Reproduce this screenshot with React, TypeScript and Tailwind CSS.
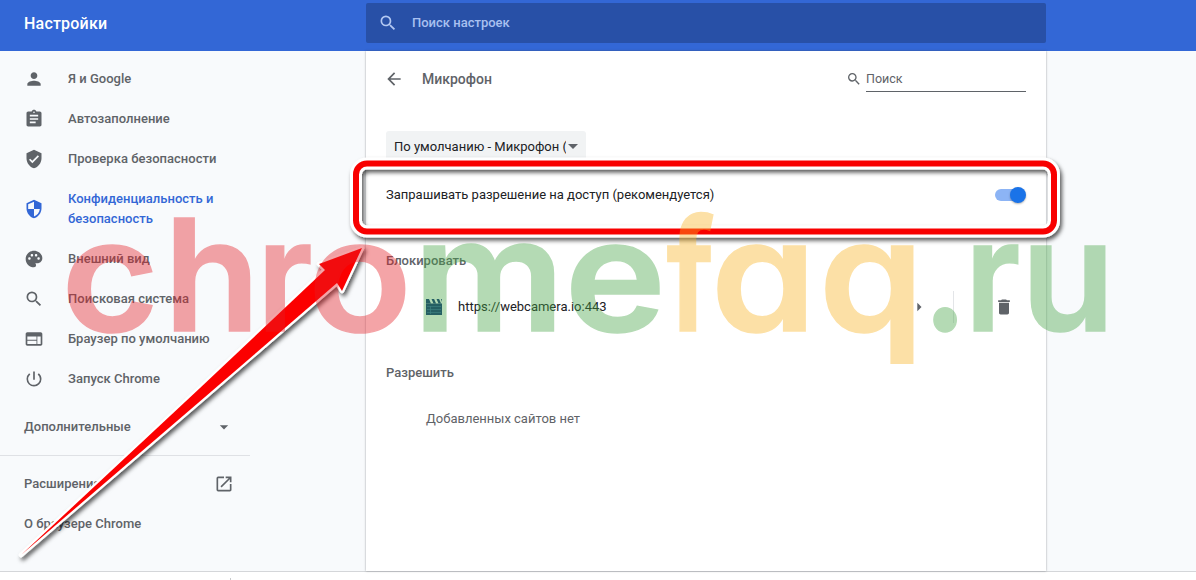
import type { IconType } from "react-icons"
import {
  MdArrowBack,
  MdArrowDropDown,
  MdArrowRight,
  MdAssignment,
  MdDelete,
  MdOpenInNew,
  MdPalette,
  MdPerson,
  MdPowerSettingsNew,
  MdSearch,
  MdSecurity,
  MdVerifiedUser,
  MdWeb,
} from "react-icons/md"

type MenuItem = {
  label: string
  icon: IconType
  active?: boolean
}

const MENU: MenuItem[] = [
  { label: "Я и Google", icon: MdPerson },
  { label: "Автозаполнение", icon: MdAssignment },
  { label: "Проверка безопасности", icon: MdVerifiedUser },
  { label: "Конфиденциальность и безопасность", icon: MdSecurity, active: true },
  { label: "Внешний вид", icon: MdPalette },
  { label: "Поисковая система", icon: MdSearch },
  { label: "Браузер по умолчанию", icon: MdWeb },
  { label: "Запуск Chrome", icon: MdPowerSettingsNew },
]

const RED = "#e61e25"
const GREEN = "#46a546"
const ORANGE = "#fab423"

// left edge and horizontal stretch of every watermark letter
const WATERMARK = [
  { char: "c", x: 61.3, stretch: 1.075, fill: RED },
  { char: "h", x: 164, stretch: 1.005, fill: RED },
  { char: "r", x: 257, stretch: 0.9, fill: RED },
  { char: "o", x: 308, stretch: 1.095, fill: RED },
  { char: "m", x: 413, stretch: 1.08, fill: GREEN },
  { char: "e", x: 564.6, stretch: 1.1, fill: GREEN },
  { char: "f", x: 666.5, stretch: 0.79, fill: ORANGE },
  { char: "a", x: 710.8, stretch: 1.085, fill: ORANGE },
  { char: "q", x: 818.8, stretch: 1.08, fill: ORANGE },
  { char: ".", x: 922.2, stretch: 0.92, fill: GREEN },
  { char: "r", x: 964.8, stretch: 0.9, fill: GREEN },
  { char: "u", x: 1020.9, stretch: 0.985, fill: GREEN },
]

function Header() {
  return <header className="flex h-[51px] shrink-0 bg-[#3367d6]">
    <div className="w-[366px] shrink-0 pl-6 pt-3 text-[16px] leading-6 font-medium tracking-[0.2px] text-white">
      Настройки
    </div>
    <div className="mt-[3px] flex h-10 w-[680px] items-center rounded-[2px] bg-[#2850a7] pl-3">
      <MdSearch className="size-5 text-[#b3c8f2]"/>
      <span className="ml-3.5 text-[13px] font-medium text-[#a9c0f0]">Поиск настроек</span>
    </div>
  </header>
}

function Sidebar() {
  return <nav className="w-[366px] shrink-0 pt-2 text-[13px] leading-5 font-medium tracking-[0.02px] text-[#5f6368]">
    {MENU.map(({ label, icon: Icon, active }) => (
      <div
        key={label}
        className={active
          ? "flex h-[60px] items-center pl-6 text-[#3367d6]"
          : "flex h-10 items-center pl-6"}
      >
        <Icon className="size-5 shrink-0"/>
        <span className="ml-6 w-[160px]">{label}</span>
      </div>
    ))}
    <div className="mt-2 flex h-10 w-[234px] items-center justify-between pl-6">
      Дополнительные
      <MdArrowDropDown className="size-5"/>
    </div>
    <div className="mt-[8px] w-[250px] border-t border-[#dfe1e5]"/>
    <div className="mt-2 flex h-10 w-[234px] items-center justify-between pl-6">
      Расширения
      <MdOpenInNew className="size-5"/>
    </div>
    <div className="flex h-10 items-center pl-6">О браузере Chrome</div>
  </nav>
}

function Toggle() {
  return <div className="flex h-3 w-[29px] items-center justify-end rounded-full bg-[#8cb4f5]">
    <div className="-mr-0.5 size-4 shrink-0 rounded-full bg-[#1a73e8] shadow-[0_1px_2px_rgba(0,0,0,0.3)]"/>
  </div>
}

function ClapperIcon() {
  return <svg viewBox="0 0 16 16" className="size-4">
    <rect y="4.500" width="16" height="11.500" fill="#103078"/>
    <path d="M0 0h3l2 4.500H0zM5.500 0h2.600l2 4.500H7.500zM10.500 0h2.600l2 4.500h-2.600zM15 0h1v3z" fill="#103078"/>
    <path d="M1 7.500h14M1 10.500h14M1 13.500h14M4.500 7v8" stroke="#3a6aa8" strokeWidth="0.7"/>
  </svg>
}

function MicrophonePanel() {
  return <main className="w-[680px] shrink-0 bg-white px-5 text-[13px] text-[#202124] shadow-[0_0_2px_rgba(60,64,67,0.5)]">
    <div className="flex h-14 items-center">
      <MdArrowBack className="-ml-0.5 size-5 text-[#5f6368]"/>
      <h1 className="ml-[18px] text-[14px] font-medium text-[#5f6368]">Микрофон</h1>
      <div className="ml-auto flex items-center text-[#5f6368]">
        <MdSearch className="mr-1 size-4"/>
        <div className="-mt-px h-[26px] w-40 border-b border-[#5f6368] pt-[3px] text-[12.5px] leading-5">Поиск</div>
      </div>
    </div>
    <div className="mt-[24px] flex h-[31px] w-[200px] items-center rounded-[3px] bg-[#f1f3f4] pl-2">
      <span className="w-[172px] overflow-hidden whitespace-nowrap">По умолчанию - Микрофон (Realtek)</span>
      <svg viewBox="0 0 10 5" className="ml-[2px] h-[5px] w-[10px] text-[#5f6368]"><path d="M0 0h10L5 5z" fill="currentColor"/></svg>
    </div>
    <div className="mt-[10px] flex h-[46px] items-center justify-between">
      <span>Запрашивать разрешение на доступ (рекомендуется)</span>
      <div className="pr-0.5"><Toggle/></div>
    </div>
    <h2 className="mt-[33px] leading-5 font-medium text-[#5f6368]">Блокировать</h2>
    <div className="mt-3 flex h-12 items-center pl-10">
      <ClapperIcon/>
      <span className="ml-4">https://webcamera.io:443</span>
      <MdArrowRight className="ml-auto size-5 text-[#5f6368]"/>
      <div className="ml-6 h-8 border-l border-[#e3e5e8]"/>
      <MdDelete className="mr-3 ml-10 size-5 text-[#5f6368]"/>
    </div>
    <h2 className="mt-8 leading-5 font-medium text-[#5f6368]">Разрешить</h2>
    <p className="mt-[26px] pl-10 leading-5 text-[#5f6368]">Добавленных сайтов нет</p>
  </main>
}

function Annotations() {
  return <svg viewBox="0 0 1196 580" className="pointer-events-none absolute inset-0 h-[580px] w-[1196px]">
    <defs>
      <filter id="drop" x="-10%" y="-20%" width="120%" height="140%">
        <feDropShadow dx="2" dy="3" stdDeviation="2" floodColor="#000" floodOpacity="0.65"/>
      </filter>
    </defs>
    <g filter="url(#drop)" fill="none">
      <rect x="356" y="163.500" width="698" height="68" rx="11" stroke="#fff" strokeWidth="12"/>
      <rect x="356" y="163.500" width="698" height="68" rx="11" stroke="#f80505" strokeWidth="6"/>
    </g>
    <path
      d="M21 555L200 388L325 270L319 264L362 248L342 291L337 283L205 397Z"
      fill="#fb0505"
      stroke="#fff"
      strokeWidth="4.5"
      strokeLinejoin="round"
      paintOrder="stroke"
      filter="url(#drop)"
    />
    <g
      opacity="0.4"
      fontSize="156"
      strokeWidth="1.5"
      className="font-['Inter'] font-semibold [font-feature-settings:'cv11']"
    >
      {WATERMARK.map(({ char, x, stretch, fill }) => (
        <text key={x} transform={`translate(${x} 331.400) scale(${stretch} 1)`} fill={fill} stroke={fill}>{char}</text>
      ))}
    </g>
  </svg>
}

export default function App() {
  return <div className="relative flex h-[580px] w-[1196px] flex-col overflow-hidden bg-white font-['Roboto',sans-serif]">
    <Header/>
    <div className="flex h-[521px] shrink-0 border-b border-[#d4d6d9] bg-[#f8fafc]">
      <Sidebar/>
      <MicrophonePanel/>
    </div>
    <div className="mt-auto ml-[230px] h-[2px] w-px bg-[#c8cacc]"/>
    <Annotations/>
  </div>
}
